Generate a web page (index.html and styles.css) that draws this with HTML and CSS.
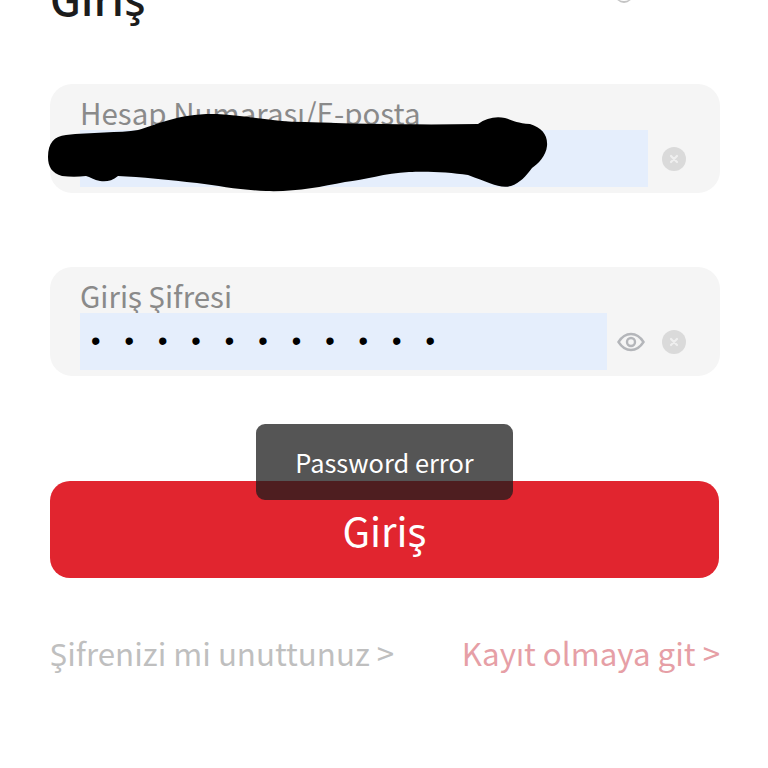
FILE: index.html
```html
<!DOCTYPE html>
<html lang="tr">
<head>
<meta charset="utf-8">
<title>Giriş</title>
<link rel="stylesheet" href="styles.css">
</head>
<body>
<main class="page">
  <h1 class="title">Giriş</h1>
  <span class="top-mark"></span>
  <form class="form">
    <div class="field">
      <label class="field-label">Hesap Numarası/E-posta</label>
      <div class="field-row">
        <div class="field-value field-value-wide"></div>
        <svg class="icon-clear" viewBox="0 0 24 24"><circle cx="12" cy="12" r="12" fill="#dadada"/><path d="M9 9l6 6M15 9l-6 6" stroke="#efefef" stroke-width="2.200" stroke-linecap="round"/></svg>
      </div>
    </div>
    <div class="field field-password">
      <label class="field-label">Giriş Şifresi</label>
      <div class="field-row">
        <div class="field-value field-value-narrow"><span class="dots">•••••••••••</span></div>
        <svg class="icon-eye" viewBox="0 0 28 20"><path d="M1.500 10C5 4.500 9 2 14 2s9 2.500 12.500 8C23 15.500 19 18 14 18S5 15.500 1.500 10z" fill="none" stroke="#b4b6ba" stroke-width="2.400"/><circle cx="14" cy="10" r="4" fill="none" stroke="#b4b6ba" stroke-width="2.400"/></svg>
        <svg class="icon-clear" viewBox="0 0 24 24"><circle cx="12" cy="12" r="12" fill="#dadada"/><path d="M9 9l6 6M15 9l-6 6" stroke="#efefef" stroke-width="2.200" stroke-linecap="round"/></svg>
      </div>
    </div>
    <button class="submit" type="button">Giriş</button>
    <div class="links">
      <a class="link link-muted">Şifrenizi mi unuttunuz &gt;</a>
      <a class="link link-accent">Kayıt olmaya git &gt;</a>
    </div>
  </form>
  <div class="toast">Password error</div>
  <svg class="scribble" viewBox="0 0 768 768"><path d="M48 157C48 143 54 136 66 135C90 132 120 133 138 130C158 124 180 113 217 114C250 116 275 122 305 122C360 124 420 125 478 124C486 118 496 116 505 118C512 120 516 123 530 124C542 128 548 135 547 146C546 156 538 164 532 168C526 176 520 183 511 186C500 189 490 183 468 175C450 172 425 171 409 172C385 173 365 180 345 182C320 187 295 192 266 191C240 190 220 186 197 183C170 180 140 177 118 176C112 181 106 182 100 181C94 180 90 177 86 176C78 177 70 177 62 176C52 173 48 167 48 157Z" fill="#000"/></svg>
</main>
</body>
</html>
```

FILE: styles.css
```css
* {
  box-sizing: border-box;
}

html,
body {
  margin: 0;
  height: 100%;
  background: #fff;
}

.page {
  position: relative;
  width: 768px;
  height: 768px;
  overflow: hidden;
  padding: 0 48px 0 50px;
  font-family: "Noto Sans CJK SC", "Noto Sans", sans-serif;
}

.title {
  margin: -28px 0 0;
  height: 112px;
  font-size: 44px;
  line-height: 50px;
  font-weight: 500;
  color: #1c1c1c;
}

.top-mark {
  position: absolute;
  left: 615px;
  top: -7px;
  width: 18px;
  height: 10px;
  border-bottom: 2px solid #c4c4c4;
  border-radius: 0 0 10px 10px;
}

.form {
  display: flex;
  flex-direction: column;
}

.field {
  height: 109px;
  padding: 11px 0 0 30px;
  background: #f5f5f5;
  border-radius: 22px;
}

.field-password {
  margin-top: 74px;
}

.field-label {
  display: block;
  height: 35px;
  font-size: 29.500px;
  line-height: 34px;
  color: #8a8a8a;
  font-weight: 400;
}

.field-row {
  display: flex;
  align-items: center;
}

.field-value {
  height: 57px;
  background: #e5eefc;
  display: flex;
  align-items: center;
}

.field-value-wide {
  width: 568px;
}

.field-value-narrow {
  width: 527px;
}

.dots {
  padding-left: 11px;
  font-family: "Liberation Sans", sans-serif;
  font-size: 27px;
  letter-spacing: 24px;
  color: #000;
  line-height: 1;
}

.icon-clear {
  width: 24px;
  height: 24px;
  margin-left: 14px;
  flex: none;
}

.icon-eye {
  width: 28px;
  height: 20px;
  margin-left: 10px;
  flex: none;
}

.icon-eye + .icon-clear {
  margin-left: 17px;
}

.submit {
  margin-top: 105px;
  margin-right: 1px;
  height: 97px;
  border: 0;
  border-radius: 20px;
  background: #e1252f;
  color: #fff;
  font: 400 40px/1 "Noto Sans CJK SC", "Noto Sans", sans-serif;
}

.links {
  margin-top: 51px;
  display: flex;
  justify-content: space-between;
}

.link {
  font-size: 31.300px;
  line-height: 48px;
}

.link-muted {
  color: #bfbfbf;
}

.link-accent {
  color: #e69fa6;
}

.toast {
  position: absolute;
  left: 256px;
  top: 424px;
  width: 257px;
  height: 76px;
  padding-top: 20px;
  text-align: center;
  font-size: 25.400px;
  line-height: 36px;
  color: #fff;
  background: rgba(28, 28, 28, 0.75);
  border-radius: 9px;
}

.scribble {
  position: absolute;
  left: 0;
  top: 0;
  width: 768px;
  height: 768px;
}
```
